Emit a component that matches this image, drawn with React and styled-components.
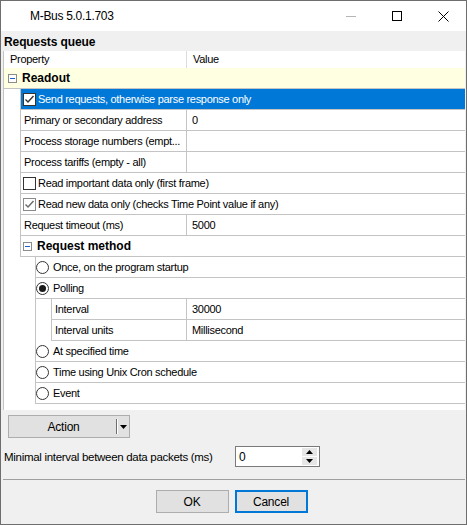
import React from 'react'
import styled, { createGlobalStyle } from 'styled-components'

const GlobalStyle = createGlobalStyle`
    body{
        margin:0;
        background:#ffffff;
        font-family:"Liberation Sans", Arial, sans-serif;
    }
`;

function CheckMark({ color }) {
    return (
        <svg width="11" height="11" viewBox="0 0 11 11">
            <path d="M1.5 5.5 L4 8 L9.5 2" fill="none" stroke={color} strokeWidth="1.4" />
        </svg>
    )
}

function Check({ checked, dim }) {
    return (
        <CheckBox $dim={dim}>
            {checked && <CheckMark color={dim ? '#6a6a6a' : '#333'} />}
        </CheckBox>
    )
}

function Toggle() {
    return (
        <ToggleBox>
            <svg width="9" height="9" viewBox="0 0 9 9">
                <rect x="0.5" y="0.5" width="8" height="8" fill="#fff" stroke="#8c8c8c" />
                <path d="M2 4.5 H7" stroke="#1d5ec7" strokeWidth="1" />
            </svg>
        </ToggleBox>
    )
}

function Radio({ checked }) {
    return (
        <RadioDot>
            {checked && <Dot />}
        </RadioDot>
    )
}

function PropRow({ name, value, edge }) {
    return (
        <Row $edge={edge}>
            <NameCell>{name}</NameCell>
            <ValueCell>{value}</ValueCell>
        </Row>
    )
}

function CheckRow({ label, checked, selected, dim }) {
    return (
        <Row $edge $selected={selected}>
            <Inline>
                <Check checked={checked} dim={dim} />
                <span>{label}</span>
            </Inline>
        </Row>
    )
}

function RadioRow({ label, checked }) {
    return (
        <Row>
            <Inline $tight>
                <Radio checked={checked} />
                <span>{label}</span>
            </Inline>
        </Row>
    )
}

function App() {
    return (
        <>
            <GlobalStyle />
            <Window>
                <TitleBar>
                    <Title>M-Bus 5.0.1.703</Title>
                    <Controls>
                        <CtrlButton>
                            <svg width="10" height="10" viewBox="0 0 10 10">
                                <path d="M0 5.5 H10" stroke="#b5b5b5" strokeWidth="1" />
                            </svg>
                        </CtrlButton>
                        <CtrlButton>
                            <svg width="10" height="10" viewBox="0 0 10 10">
                                <rect x="0.5" y="0.5" width="9" height="9" fill="none" stroke="#000" strokeWidth="1" />
                            </svg>
                        </CtrlButton>
                        <CtrlButton>
                            <svg width="11" height="11" viewBox="0 0 11 11">
                                <path d="M0.5 0.5 L10.5 10.5 M10.5 0.5 L0.5 10.5" stroke="#000" strokeWidth="1" />
                            </svg>
                        </CtrlButton>
                    </Controls>
                </TitleBar>
                <Body>
                    <SectionTitle>Requests queue</SectionTitle>
                    <Grid>
                        <Header>
                            <HeadCell>Property</HeadCell>
                            <HeadValue>Value</HeadValue>
                        </Header>
                        <Category>
                            <Toggle />
                            <Bold>Readout</Bold>
                        </Category>
                        <Indent>
                            <CheckRow label="Send requests, otherwise parse response only" checked selected />
                            <PropRow edge name="Primary or secondary address" value="0" />
                            <PropRow edge name="Process storage numbers (empt..." value="" />
                            <PropRow edge name="Process tariffs (empty - all)" value="" />
                            <CheckRow label="Read important data only (first frame)" />
                            <CheckRow label="Read new data only (checks Time Point value if any)" checked dim />
                            <PropRow edge name="Request timeout (ms)" value="5000" />
                            <Row $edge>
                                <Inline $gap={5}>
                                    <Toggle />
                                    <Bold>Request method</Bold>
                                </Inline>
                            </Row>
                            <SubGroup>
                                <RadioRow label="Once, on the program startup" />
                                <RadioRow label="Polling" checked />
                                <SubGroup>
                                    <PropRow name="Interval" value="30000" />
                                    <PropRow name="Interval units" value="Millisecond" />
                                </SubGroup>
                                <RadioRow label="At specified time" />
                                <RadioRow label="Time using Unix Cron schedule" />
                                <RadioRow label="Event" />
                            </SubGroup>
                        </Indent>
                    </Grid>
                    <ActionButton>
                        <ActionLabel>Action</ActionLabel>
                        <ActionArrow>
                            <svg width="7" height="4" viewBox="0 0 7 4">
                                <path d="M0 0 H7 L3.5 4 Z" fill="#000" />
                            </svg>
                        </ActionArrow>
                    </ActionButton>
                    <FieldRow>
                        <FieldLabel>Minimal interval between data packets (ms)</FieldLabel>
                        <SpinBox>
                            <SpinText>0</SpinText>
                            <SpinButtons>
                                <SpinBtn>
                                    <svg width="7" height="4" viewBox="0 0 7 4">
                                        <path d="M0 4 H7 L3.5 0 Z" fill="#000" />
                                    </svg>
                                </SpinBtn>
                                <SpinBtn>
                                    <svg width="7" height="4" viewBox="0 0 7 4">
                                        <path d="M0 0 H7 L3.5 4 Z" fill="#000" />
                                    </svg>
                                </SpinBtn>
                            </SpinButtons>
                        </SpinBox>
                    </FieldRow>
                    <Separator />
                    <ButtonRow>
                        <DialogButton>OK</DialogButton>
                        <DialogButton $focused>Cancel</DialogButton>
                    </ButtonRow>
                </Body>
            </Window>
        </>
    )
}

const Window = styled.div`
    width:467px;
    height:525px;
    box-sizing:border-box;
    border:1px solid #6e6e6e;
    display:flex;
    flex-direction:column;
    background:#f0f0f0;
    font-size:11px;
    letter-spacing:-0.3px;
    color:#000;
`;
const TitleBar = styled.div`
    height:30px;
    background:#fff;
    display:flex;
    align-items:center;
`;
const Title = styled.div`
    padding-left:29px;
    font-size:12px;
    letter-spacing:-0.3px;
`;
const Controls = styled.div`
    margin-left:auto;
    display:flex;
    height:100%;
`;
const CtrlButton = styled.div`
    width:46px;
    height:100%;
    display:flex;
    align-items:center;
    justify-content:center;
`;
const Body = styled.div`
    flex:1;
    display:flex;
    flex-direction:column;
    padding:0 0 0 2px;
`;
const SectionTitle = styled.div`
    height:20px;
    line-height:22px;
    padding-left:1px;
    font-size:12px;
    font-weight:700;
    letter-spacing:-0.1px;
`;
const Grid = styled.div`
    width:462px;
    box-sizing:border-box;
    border-left:1px solid #c4c4c4;
    background:#fff;
    padding-bottom:6px;
`;
const Header = styled.div`
    display:flex;
    height:17px;
    line-height:17px;
`;
const HeadCell = styled.div`
    flex:1;
    padding-left:6px;
`;
const HeadValue = styled.div`
    width:279px;
    box-sizing:border-box;
    border-left:1px solid #dcdcdc;
    padding-left:6px;
`;
const Category = styled.div`
    height:21px;
    box-sizing:border-box;
    border-bottom:1px solid #c4c4c4;
    background:#ffffe1;
    display:flex;
    align-items:center;
    padding-left:4px;
    gap:5px;
`;
const Bold = styled.span`
    font-size:12px;
    font-weight:700;
    letter-spacing:0;
`;
const ToggleBox = styled.span`
    display:flex;
    width:9px;
    height:9px;
`;
const Indent = styled.div`
    padding-left:16px;
`;
const SubGroup = styled.div`
    margin-left:15px;
    border-left:1px solid #c4c4c4;
`;
const Row = styled.div`
    height:21px;
    box-sizing:border-box;
    display:flex;
    align-items:stretch;
    border-bottom:1px solid #c4c4c4;
    border-left:${p => p.$edge ? '1px solid #c4c4c4' : 'none'};
    background:${p => p.$selected ? '#0078d7' : '#fff'};
    color:${p => p.$selected ? '#fff' : '#000'};
`;
const NameCell = styled.div`
    flex:1;
    padding-left:3px;
    display:flex;
    align-items:center;
    white-space:nowrap;
    overflow:hidden;
`;
const ValueCell = styled.div`
    width:279px;
    box-sizing:border-box;
    border-left:1px solid #c4c4c4;
    padding-left:5px;
    display:flex;
    align-items:center;
`;
const Inline = styled.div`
    display:flex;
    align-items:center;
    gap:${p => p.$gap ? p.$gap : p.$tight ? 4 : 2}px;
    padding-left:${p => p.$tight ? 0 : 2}px;
    white-space:nowrap;
`;
const CheckBox = styled.span`
    width:13px;
    height:13px;
    box-sizing:border-box;
    border:1px solid ${p => p.$dim ? '#8a8a8a' : '#333'};
    background:#fff;
    display:flex;
    align-items:center;
    justify-content:center;
`;
const RadioDot = styled.span`
    width:13px;
    height:13px;
    box-sizing:border-box;
    border:1px solid #333;
    border-radius:50%;
    background:#fff;
    display:flex;
    align-items:center;
    justify-content:center;
`;
const Dot = styled.span`
    width:7px;
    height:7px;
    border-radius:50%;
    background:#1a1a1a;
`;
const ActionButton = styled.div`
    margin:5px 0 0 5px;
    width:122px;
    height:23px;
    box-sizing:border-box;
    border:1px solid #adadad;
    background:#e1e1e1;
    display:flex;
    align-items:stretch;
`;
const ActionLabel = styled.div`
    flex:1;
    display:flex;
    align-items:center;
    justify-content:center;
    font-size:12px;
    letter-spacing:-0.2px;
    border-right:1px solid #6d6d6d;
    margin:3px 0;
    padding-left:2px;
`;
const ActionArrow = styled.div`
    width:11px;
    display:flex;
    align-items:center;
    justify-content:center;
    border-left:1px solid #fff;
    margin:3px 0;
`;
const FieldRow = styled.div`
    margin-top:8px;
    display:flex;
    align-items:center;
    padding-left:1px;
`;
const FieldLabel = styled.div`
    width:231px;
    font-size:11.5px;
    letter-spacing:-0.3px;
`;
const SpinBox = styled.div`
    width:85px;
    height:21px;
    box-sizing:border-box;
    border:1px solid #7a7a7a;
    background:#fff;
    display:flex;
    align-items:center;
`;
const SpinText = styled.div`
    flex:1;
    padding-left:3px;
    font-size:12px;
`;
const SpinButtons = styled.div`
    display:flex;
    flex-direction:column;
    gap:1px;
    margin-right:2px;
`;
const SpinBtn = styled.div`
    width:15px;
    height:8px;
    background:#e6e6e6;
    display:flex;
    align-items:center;
    justify-content:center;
`;
const Separator = styled.div`
    margin-top:12px;
    width:462px;
    height:1px;
    background:#a0a0a0;
`;
const ButtonRow = styled.div`
    margin-top:10px;
    display:flex;
    justify-content:center;
    gap:6px;
    padding-right:6px;
`;
const DialogButton = styled.div`
    width:73px;
    height:23px;
    box-sizing:border-box;
    border:${p => p.$focused ? '2px solid #0078d7' : '1px solid #adadad'};
    background:#e1e1e1;
    display:flex;
    align-items:center;
    justify-content:center;
    font-size:12px;
    letter-spacing:-0.2px;
`;

export default App
